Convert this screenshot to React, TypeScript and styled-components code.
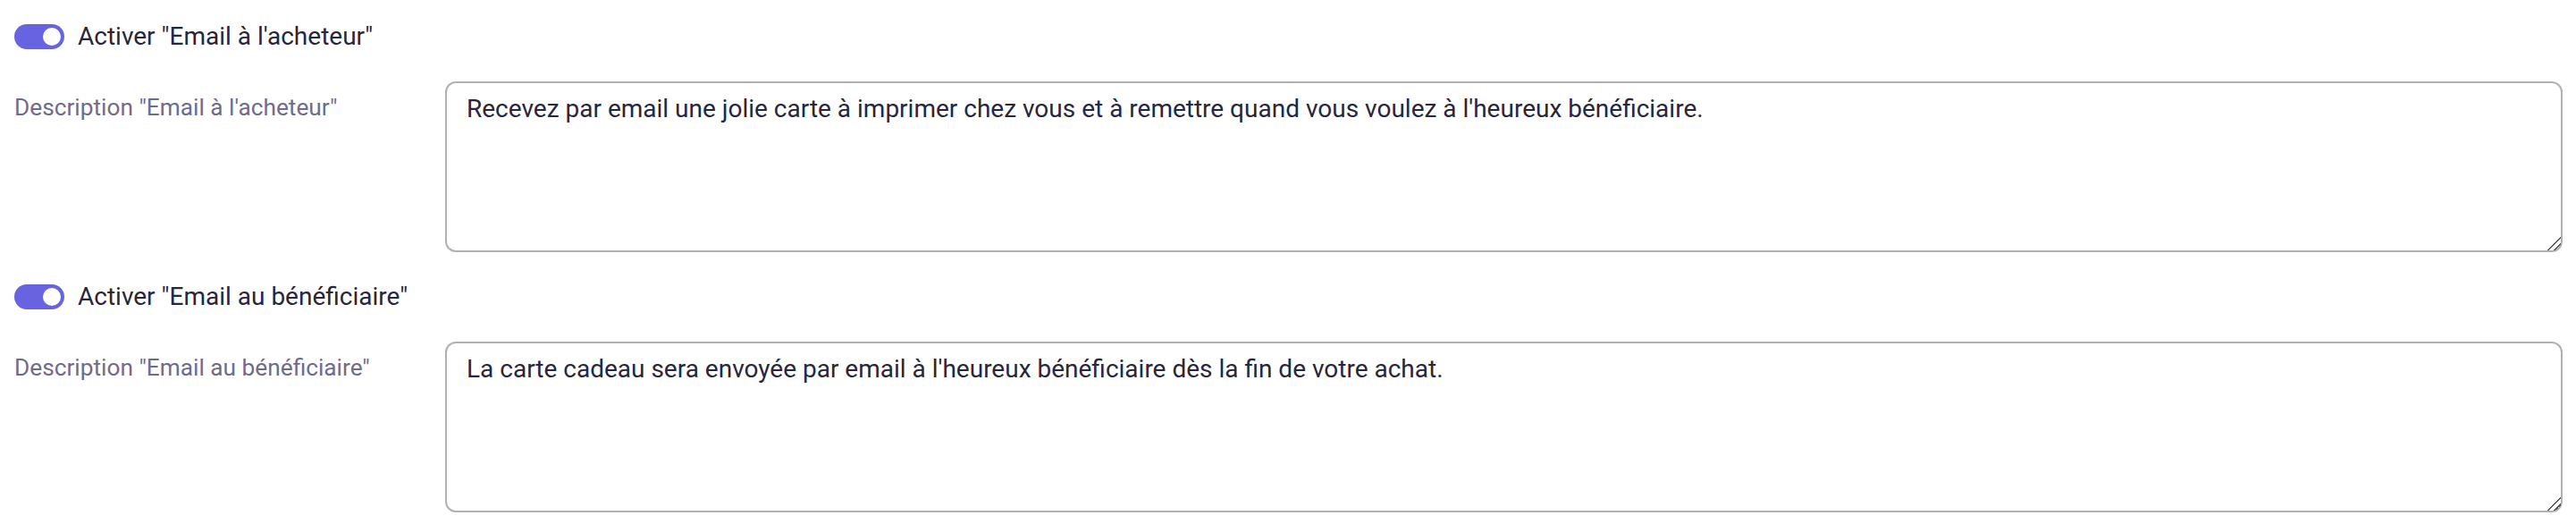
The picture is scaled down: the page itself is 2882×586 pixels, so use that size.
import React from "react";
import styled, { createGlobalStyle } from "styled-components";

const GlobalStyle = createGlobalStyle`
  html, body {
    margin: 0;
    padding: 0;
    background: #ffffff;
  }
  body {
    font-family: Roboto, "Noto Sans", Arial, sans-serif;
  }
`;

const Page = styled.div`
  display: flex;
  flex-direction: column;
  gap: 36px;
  padding: 27px 15px 13px 16px;
`;

const ToggleRow = styled.label`
  display: flex;
  align-items: center;
  gap: 15px;
  height: 28px;
  cursor: pointer;
`;

const Switch = styled.span<{ $on: boolean }>`
  position: relative;
  flex: none;
  width: 56px;
  height: 28px;
  border-radius: 14px;
  background: ${(p) => (p.$on ? "#6864e1" : "#c9c8d6")};

  &::after {
    content: "";
    position: absolute;
    top: 4px;
    left: ${(p) => (p.$on ? "32px" : "4px")};
    width: 20px;
    height: 20px;
    border-radius: 50%;
    background: #ffffff;
  }
`;

const ToggleText = styled.span`
  font-size: 28px;
  line-height: 28px;
  color: #28263c;
`;

const FieldRow = styled.div`
  display: grid;
  grid-template-columns: 482px 1fr;
  align-items: start;
`;

const FieldLabel = styled.label`
  padding-top: 14px;
  font-size: 26.25px;
  line-height: normal;
  color: #6f6b8f;
`;

const TextArea = styled.textarea`
  display: block;
  box-sizing: border-box;
  width: 100%;
  height: 191px;
  margin: 0;
  padding: 8px 22px;
  border: 2px solid #b1b1b1;
  border-radius: 12px;
  font-family: Roboto, "Noto Sans", Arial, sans-serif;
  font-size: 28px;
  line-height: 1.5;
  color: #28263c;
  background: #ffffff;
  resize: vertical;
  outline: none;

  &::-webkit-scrollbar {
    width: 16px;
    height: 16px;
  }

  &::-webkit-resizer {
    background: linear-gradient(
      135deg,
      transparent 0 49%,
      #5a5a5a 49% 56%,
      transparent 56% 73%,
      #5a5a5a 73% 80%,
      transparent 80%
    );
  }
`;

const sections = [
  {
    id: "buyer",
    toggle: 'Activer "Email à l\'acheteur"',
    label: 'Description "Email à l\'acheteur"',
    value:
      "Recevez par email une jolie carte à imprimer chez vous et à remettre quand vous voulez à l'heureux bénéficiaire.",
  },
  {
    id: "recipient",
    toggle: 'Activer "Email au bénéficiaire"',
    label: 'Description "Email au bénéficiaire"',
    value:
      "La carte cadeau sera envoyée par email à l'heureux bénéficiaire dès la fin de votre achat.",
  },
];

export default function App() {
  return (
    <>
      <GlobalStyle />
      <Page>
        {sections.map((s) => (
          <React.Fragment key={s.id}>
            <ToggleRow>
              <Switch $on={true} />
              <ToggleText>{s.toggle}</ToggleText>
            </ToggleRow>
            <FieldRow>
              <FieldLabel htmlFor={s.id}>{s.label}</FieldLabel>
              <TextArea id={s.id} defaultValue={s.value} />
            </FieldRow>
          </React.Fragment>
        ))}
      </Page>
    </>
  );
}
